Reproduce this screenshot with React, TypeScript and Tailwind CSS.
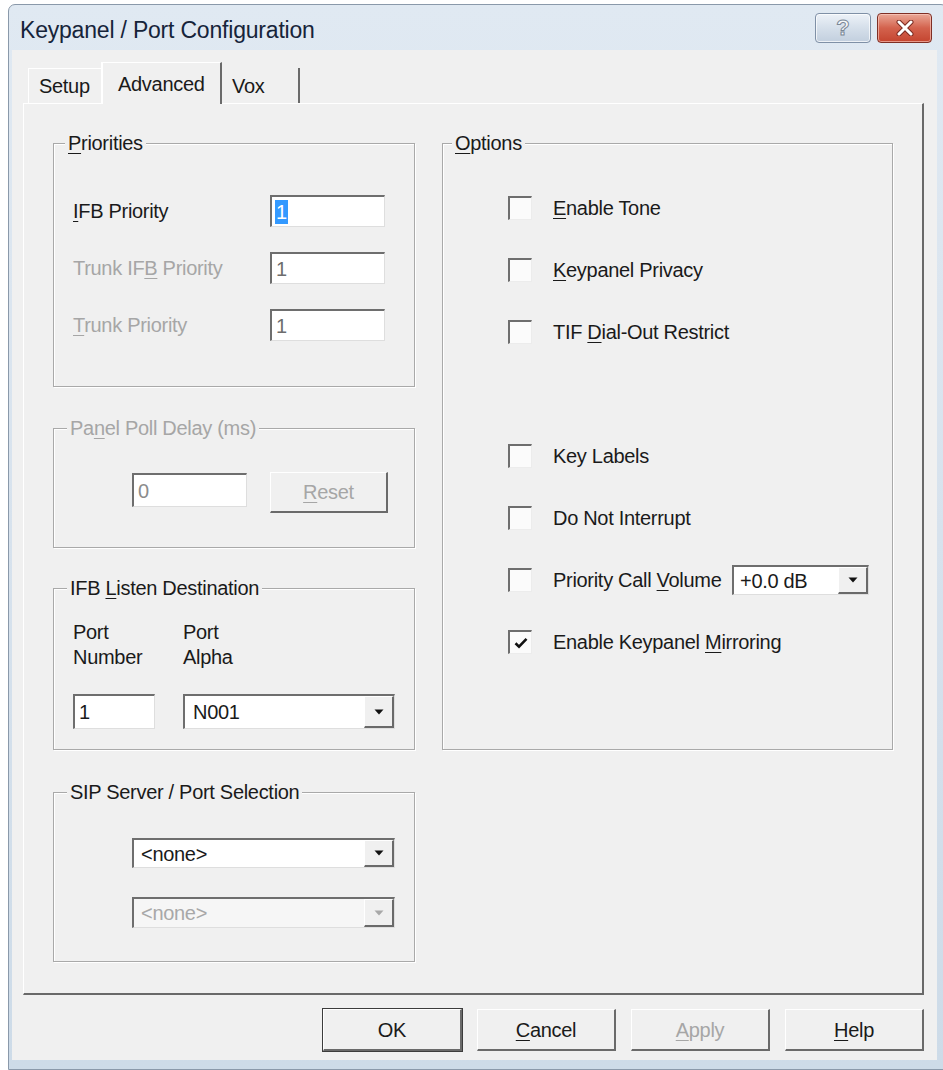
import React from "react";

const txt = "text-[20px] leading-[24px] tracking-[-0.3px]";
const sunken =
  "bg-white border-t-2 border-l-2 border-t-[#6e6e6e] border-l-[#6e6e6e] border-r border-b border-r-[#dedede] border-b-[#dedede]";
const raised =
  "bg-[#f0f0f0] border-t border-l border-t-white border-l-white border-r-2 border-b-2 border-r-[#6a6a6a] border-b-[#6a6a6a]";

function U({ children }: { children: React.ReactNode }) {
  return <span className="underline underline-offset-[3px] decoration-1">{children}</span>;
}

function Group({
  legend,
  className,
  legendPos,
  disabled,
  children,
}: {
  legend: React.ReactNode;
  className: string;
  legendPos: string;
  disabled?: boolean;
  children?: React.ReactNode;
}) {
  return (
    <div
      className={`relative border border-[#a9a9a9] shadow-[inset_1px_1px_0_#ffffff,1px_1px_0_#ffffff] ${className}`}
    >
      <div
        className={`absolute -top-[13px] px-[3px] bg-[#f0f0f0] whitespace-nowrap ${txt} ${legendPos} ${
          disabled ? "text-[#a6a6a6]" : "text-[#1a1a1a]"
        }`}
      >
        {legend}
      </div>
      {children}
    </div>
  );
}

function Arrow({ disabled }: { disabled?: boolean }) {
  return (
    <svg width="10" height="6" viewBox="0 0 10 6">
      <path d="M0.5 0.5H9.5L5 5.5Z" fill={disabled ? "#a8a8a8" : "#111"} />
    </svg>
  );
}

function Combo({
  value,
  className,
  disabled,
  pad,
}: {
  value: string;
  className: string;
  disabled?: boolean;
  pad: string;
}) {
  return (
    <div
      className={`flex items-stretch border-t-2 border-l-2 border-t-[#6e6e6e] border-l-[#6e6e6e] border-r border-b border-r-[#dedede] border-b-[#dedede] ${
        disabled ? "bg-[#f6f6f6]" : "bg-white"
      } ${className}`}
    >
      <div
        className={`flex-1 flex items-center ${pad} ${txt} ${
          disabled ? "text-[#a8a8a8]" : "text-[#1a1a1a]"
        }`}
      >
        {value}
      </div>
      <div className={`w-[30px] flex items-center justify-center ${raised}`}>
        <Arrow disabled={disabled} />
      </div>
    </div>
  );
}

function Check({ label, checked }: { label: React.ReactNode; checked?: boolean }) {
  return (
    <div className="h-[62px] flex items-center">
      <div className="w-[24px] h-[24px] flex items-center justify-center bg-[#fbfbfb] border-t-2 border-l-2 border-t-[#6e6e6e] border-l-[#6e6e6e] border-r border-b border-r-[#ececec] border-b-[#ececec]">
        {checked && (
          <svg width="14" height="12" viewBox="0 0 14 12">
            <path d="M1.5 6.2L5 9.6L12.5 1.8" fill="none" stroke="#111" strokeWidth="2.6" />
          </svg>
        )}
      </div>
      <div className={`ml-[21px] ${txt} text-[#1a1a1a] whitespace-nowrap`}>{label}</div>
    </div>
  );
}

function Btn({
  children,
  className,
  disabled,
}: {
  children: React.ReactNode;
  className: string;
  disabled?: boolean;
}) {
  return (
    <div
      className={`flex items-center justify-center ${raised} ${txt} ${
        disabled ? "text-[#a6a6a6]" : "text-[#1a1a1a]"
      } ${className}`}
    >
      {children}
    </div>
  );
}

export default function App() {
  return (
    <div className="w-[943px] h-[1070px] bg-white overflow-hidden font-['Liberation_Sans',Arial,sans-serif] text-[#1a1a1a]">
      <div className="ml-[8px] mt-[4px] w-[940px] h-[1066px] rounded-tl-[7px] rounded-tr-[7px] border border-[#8a99aa] bg-linear-to-b from-[#e0e9f2] via-[#d7e2ed] to-[#cddbe8] flex flex-col pl-[3px] pr-[10px] pb-[9px]">
        {/* Title bar */}
        <div className="h-[45px] flex items-start justify-between pl-[8px] pr-[5px]">
          <div className="mt-[10px] text-[23px] leading-[30px] tracking-[-0.2px] text-[#16243a]">
            Keypanel / Port Configuration
          </div>
          <div className="mt-[8px] flex gap-[6px]">
            <div className="w-[56px] h-[30px] rounded-[4px] border border-[#7f90a6] bg-linear-to-b from-[#edf2f8] via-[#d5dfea] to-[#c2cfde] shadow-[inset_0_0_0_1px_rgba(255,255,255,0.7)] flex items-center justify-center">
              <span className="text-[22px] leading-[24px] font-bold text-[#f4f7fa] [-webkit-text-stroke:1px_#7a8796]">
                ?
              </span>
            </div>
            <div className="w-[55px] h-[30px] rounded-[4px] border border-[#7e2f25] bg-linear-to-b from-[#e9a797] via-[#d3624d] to-[#c4442f] shadow-[inset_0_0_0_1px_rgba(255,210,200,0.6)] flex items-center justify-center">
              <svg width="18" height="16" viewBox="0 0 18 16">
                <path d="M3 2L15 14M15 2L3 14" stroke="#7a2a20" strokeWidth="5" strokeLinecap="round" />
                <path d="M3 2L15 14M15 2L3 14" stroke="#ffffff" strokeWidth="3" strokeLinecap="round" />
              </svg>
            </div>
          </div>
        </div>

        {/* Client */}
        <div className="flex-1 bg-[#f0f0f0] pt-[12px] pl-[11px] pr-[13px] flex flex-col">
          {/* Tabs */}
          <div className="h-[41px] flex items-end pl-[5px]">
            <div
              className={`w-[73px] h-[35px] flex items-center pl-[10px] border-t border-l border-t-white border-l-white ${txt}`}
            >
              Setup
            </div>
            <div
              className={`relative z-10 -mb-px w-[121px] h-[42px] flex items-center pl-[15px] bg-[#f0f0f0] border-t border-l-2 border-r-2 border-t-white border-l-white border-r-[#6a6a6a] ${txt}`}
            >
              Advanced
            </div>
            <div className={`w-[78px] h-[35px] flex items-center pl-[10px] border-r-2 border-r-[#6a6a6a] ${txt}`}>
              Vox
            </div>
          </div>

          {/* Tab panel */}
          <div className="h-[892px] flex gap-[27px] pl-[29px] pt-[39px] border-t border-l border-t-white border-l-white border-r-2 border-b-2 border-r-[#696969] border-b-[#696969]">
            {/* Left column */}
            <div className="w-[362px] flex flex-col">
              <Group
                className="h-[244px] pt-[51px] pl-[19px]"
                legendPos="left-[11px]"
                legend={
                  <>
                    <U>P</U>riorities
                  </>
                }
              >
                <div className="flex flex-col gap-[25px]">
                  <div className="flex items-center h-[32px]">
                    <div className={`w-[197px] ${txt}`}>
                      <U>I</U>FB Priority
                    </div>
                    <div className={`w-[115px] h-[32px] flex items-center pl-[3px] ${sunken}`}>
                      <span className={`bg-[#3399ff] text-white px-[1px] ${txt}`}>1</span>
                    </div>
                  </div>
                  <div className="flex items-center h-[32px]">
                    <div className={`w-[197px] text-[#a6a6a6] ${txt}`}>
                      Trunk IF<U>B</U> Priority
                    </div>
                    <div className={`w-[115px] h-[32px] flex items-center pl-[4px] text-[#6d6d6d] ${sunken} ${txt}`}>
                      1
                    </div>
                  </div>
                  <div className="flex items-center h-[32px]">
                    <div className={`w-[197px] text-[#a6a6a6] ${txt}`}>
                      <U>T</U>runk Priority
                    </div>
                    <div className={`w-[115px] h-[32px] flex items-center pl-[4px] text-[#6d6d6d] ${sunken} ${txt}`}>
                      1
                    </div>
                  </div>
                </div>
              </Group>

              <Group
                className="mt-[41px] h-[120px] pt-[44px] pl-[78px] flex items-start"
                legendPos="left-[13px]"
                disabled
                legend={
                  <>
                    Pa<U>n</U>el Poll Delay (ms)
                  </>
                }
              >
                <div className={`w-[115px] h-[34px] flex items-center pl-[4px] text-[#8c8c8c] ${sunken} ${txt}`}>
                  0
                </div>
                <Btn className="ml-[23px] -mt-px w-[118px] h-[41px]" disabled>
                  <U>R</U>eset
                </Btn>
              </Group>

              <Group
                className="mt-[40px] h-[162px] pt-[31px] pl-[19px]"
                legendPos="left-[13px]"
                legend={
                  <>
                    IFB <U>L</U>isten Destination
                  </>
                }
              >
                <div className="flex text-[20px] leading-[25px] tracking-[-0.3px]">
                  <div className="w-[110px]">
                    Port
                    <br />
                    Number
                  </div>
                  <div>
                    Port
                    <br />
                    Alpha
                  </div>
                </div>
                <div className="mt-[24px] flex">
                  <div className={`w-[82px] h-[35px] flex items-center pl-[4px] ${sunken} ${txt}`}>1</div>
                  <Combo value="N001" className="ml-[28px] w-[212px] h-[35px]" pad="pl-[8px]" />
                </div>
              </Group>

              <Group
                className="mt-[42px] h-[170px] pt-[45px] pl-[78px]"
                legendPos="left-[13px]"
                legend="SIP Server / Port Selection"
              >
                <Combo value="<none>" className="w-[263px] h-[30px]" pad="pl-[7px]" />
                <Combo value="<none>" className="mt-[29px] w-[263px] h-[31px]" pad="pl-[7px]" disabled />
              </Group>
            </div>

            {/* Right column */}
            <Group
              className="w-[451px] h-[607px] pt-[33px] pl-[65px]"
              legendPos="left-[9px]"
              legend={
                <>
                  <U>O</U>ptions
                </>
              }
            >
              <Check
                label={
                  <>
                    <U>E</U>nable Tone
                  </>
                }
              />
              <Check
                label={
                  <>
                    <U>K</U>eypanel Privacy
                  </>
                }
              />
              <Check
                label={
                  <>
                    TIF <U>D</U>ial-Out Restrict
                  </>
                }
              />
              <div className="h-[62px]" />
              <Check label="Key Labels" />
              <Check label="Do Not Interrupt" />
              <div className="h-[62px] flex items-center">
                <div className="w-[24px] h-[24px] bg-[#fbfbfb] border-t-2 border-l-2 border-t-[#6e6e6e] border-l-[#6e6e6e] border-r border-b border-r-[#ececec] border-b-[#ececec]" />
                <div className={`ml-[21px] w-[179px] whitespace-nowrap ${txt}`}>
                  Priority Call <U>V</U>olume
                </div>
                <Combo value="+0.0 dB" className="w-[137px] h-[30px]" pad="pl-[6px]" />
              </div>
              <Check
                checked
                label={
                  <>
                    Enable Keypanel <U>M</U>irroring
                  </>
                }
              />
            </Group>
          </div>

          {/* Bottom buttons */}
          <div className="mt-[14px] h-[42px] flex justify-end gap-[15px]">
            <Btn className="w-[139px] h-[42px] shadow-[0_0_0_1px_#3c3c3c]">OK</Btn>
            <Btn className="w-[139px] h-[42px]">
              <U>C</U>ancel
            </Btn>
            <Btn className="w-[139px] h-[42px]" disabled>
              <U>A</U>pply
            </Btn>
            <Btn className="w-[139px] h-[42px]">
              <U>H</U>elp
            </Btn>
          </div>
        </div>
      </div>
    </div>
  );
}
